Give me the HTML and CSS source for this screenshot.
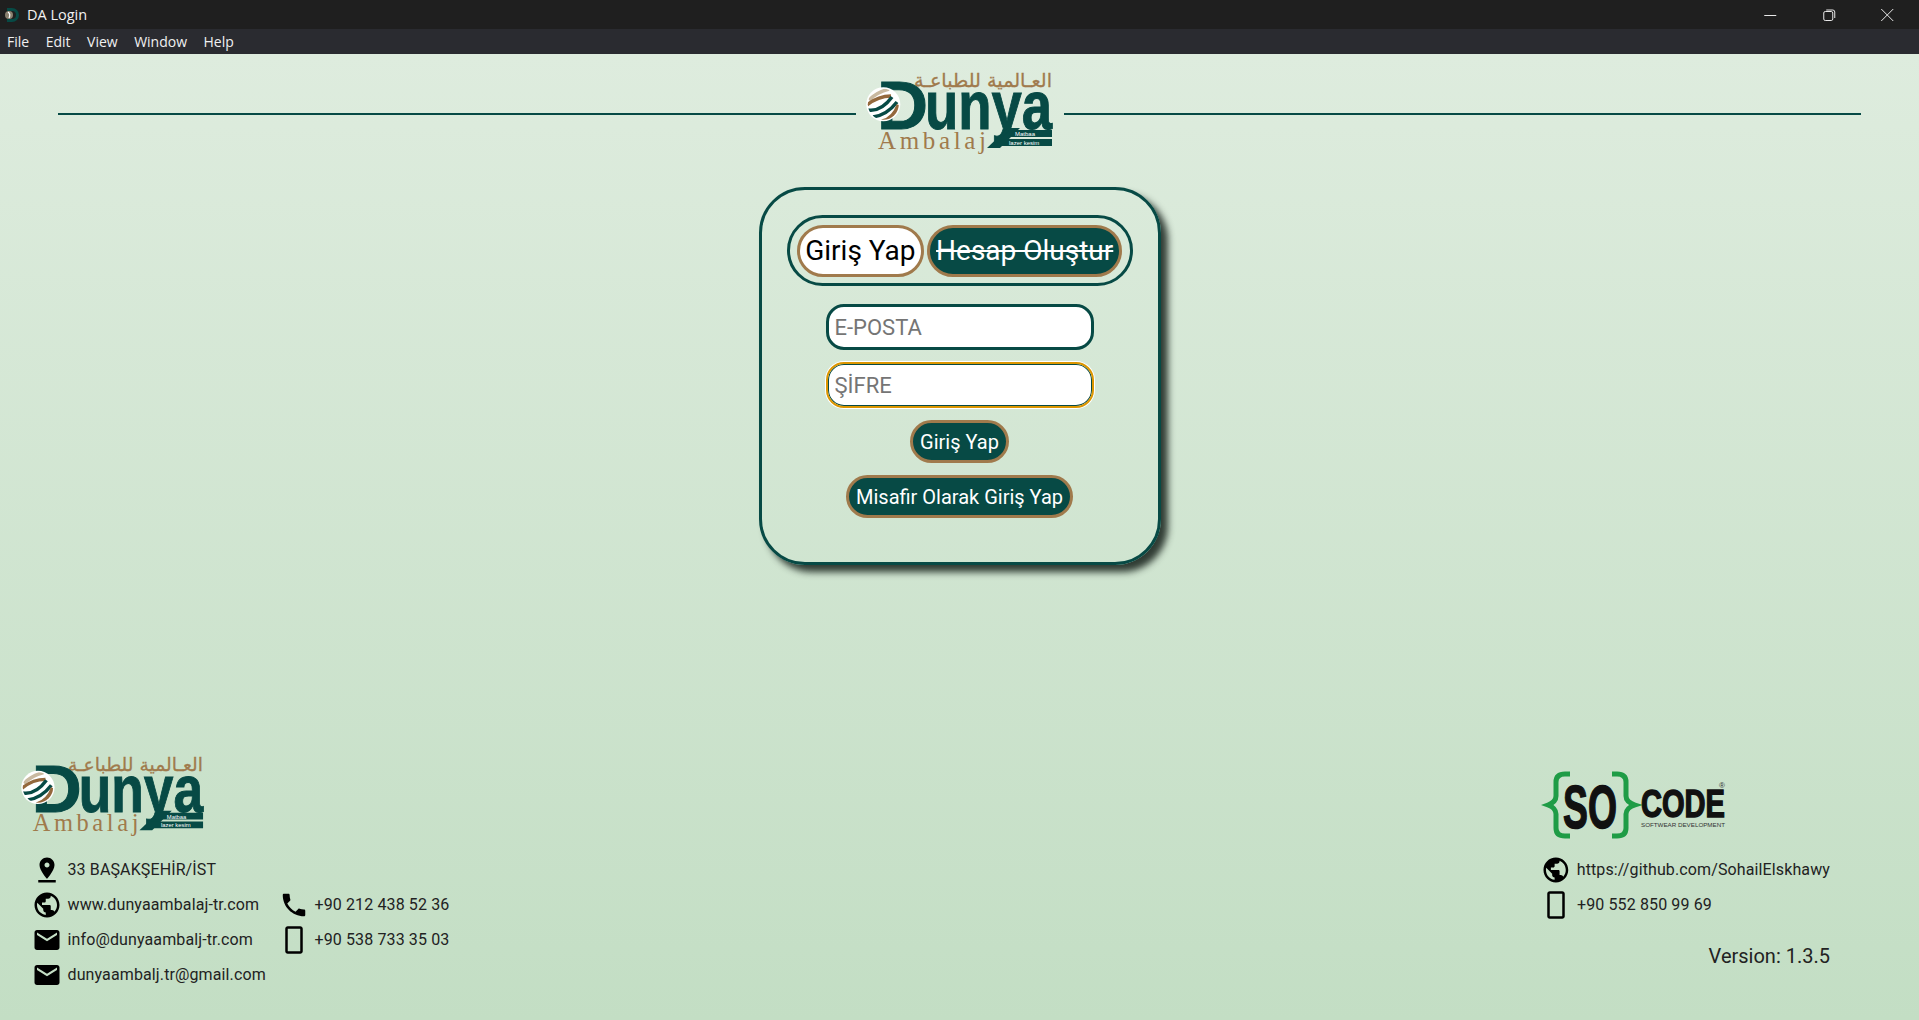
FILE: index.html
```html
<!DOCTYPE html>
<html lang="en">
<head>
    <meta charset="UTF-8">
    <meta name="viewport" content="width=device-width, initial-scale=1.0">
    <title>DA Login</title>
    <link rel="stylesheet" href="styles.css">
</head>
<body>
    <svg class="clip-defs" aria-hidden="true">
        <clipPath id="globe-clip"><circle cx="18.3" cy="34.3" r="15.5"/></clipPath>
    </svg>
    <svg class="defs" aria-hidden="true">
        <symbol id="i-place" viewBox="0 0 24 24"><path d="M18 8c0-3.31-2.69-6-6-6S6 4.69 6 8c0 4.5 6 11 6 11s6-6.5 6-11zm-8 0c0-1.1.9-2 2-2s2 .9 2 2-.89 2-2 2c-1.1 0-2-.9-2-2zM5 20v2h14v-2H5z"/></symbol>
        <symbol id="i-globe" viewBox="0 0 24 24"><path d="M12 2C6.48 2 2 6.48 2 12s4.48 10 10 10 10-4.48 10-10S17.52 2 12 2zm-1 17.93c-3.95-.49-7-3.85-7-7.93 0-.62.08-1.21.21-1.79L9 15v1c0 1.1.9 2 2 2v1.93zm6.9-2.54c-.26-.81-1-1.39-1.9-1.39h-1v-3c0-.55-.45-1-1-1H8v-2h2c.55 0 1-.45 1-1V7h2c1.1 0 2-.9 2-2v-.41c2.93 1.19 5 4.06 5 7.41 0 2.08-.8 3.97-2.1 5.39z"/></symbol>
        <symbol id="i-mail" viewBox="0 0 24 24"><path d="M20 4H4c-1.1 0-1.99.9-1.99 2L2 18c0 1.1.9 2 2 2h16c1.1 0 2-.9 2-2V6c0-1.1-.9-2-2-2zm0 4l-8 5-8-5V6l8 5 8-5v2z"/></symbol>
        <symbol id="i-phone" viewBox="0 0 24 24"><path d="M6.62 10.79c1.44 2.83 3.76 5.14 6.59 6.59l2.2-2.2c.27-.27.67-.36 1.02-.24 1.12.37 2.33.57 3.57.57.55 0 1 .45 1 1V20c0 .55-.45 1-1 1-9.39 0-17-7.61-17-17 0-.55.45-1 1-1h3.5c.55 0 1 .45 1 1 0 1.25.2 2.45.57 3.57.11.35.03.74-.25 1.02l-2.2 2.2z"/></symbol>
        <symbol id="i-mobile" viewBox="0 0 24 24"><path d="M17 1.01L7 1c-1.1 0-2 .9-2 2v18c0 1.1.9 2 2 2h10c1.1 0 2-.9 2-2V3c0-1.1-.9-1.99-2-1.99zM17 21H7V3h10v18z"/></symbol>

        <symbol id="dunya-logo" viewBox="0 0 190 85">
            <text class="logo-ar" x="187" y="17" direction="rtl" textLength="138" lengthAdjust="spacingAndGlyphs">العـالمية للطباعـة</text>
            <text class="logo-word" x="12" y="59" textLength="51" lengthAdjust="spacingAndGlyphs">D</text>
            <text class="logo-word" x="60" y="59" textLength="127" lengthAdjust="spacingAndGlyphs">unya</text>
            <circle class="logo-green" cx="54" cy="29" r="2"/>
            <polygon class="logo-green" points="143,58 155,58 135,78 122,78"/>
            <circle cx="18.3" cy="34.3" r="17" fill="#fff"/>
            <g clip-path="url(#globe-clip)">
                <path d="M4 30q8-8 20-11" class="arc-cream"/>
                <path d="M2 35q11-9 24-9" class="arc-brown"/>
                <path d="M3 40q13 2 24-13" class="arc-green"/>
                <path d="M8 47q14-2 24-15" class="arc-green"/>
                <path d="M17 52q12-3 17-17" class="arc-brown arc-wide"/>
            </g>
            <polygon class="logo-green" points="144,60 187,60 187,67 138,67"/>
            <polygon class="logo-green" points="135,69 187,69 187,76 128,76"/>
            <text class="logo-small" x="150" y="66">Matbaa</text>
            <text class="logo-small" x="144" y="75">lazer kesim</text>
            <text class="logo-amb" x="13" y="79" textLength="108">Ambalaj</text>
        </symbol>

        <symbol id="socode-logo" viewBox="0 0 186 72">
            <path class="brace" d="M29 4h-5q-9 0-9 8v14q0 6-8 9q8 3 8 9v14q0 8 9 8h5"/>
            <path class="brace" d="M71 4h5q9 0 9 8v14q0 6 9 9q-9 3-9 9v14q0 8-9 8h-5"/>
            <text class="so-word" x="22" y="58" textLength="54" lengthAdjust="spacingAndGlyphs">SO</text>
            <text class="code-word" x="100" y="47" textLength="84" lengthAdjust="spacingAndGlyphs">CODE</text>
            <text class="code-sub" x="100" y="57" textLength="84" lengthAdjust="spacingAndGlyphs">SOFTWEAR DEVELOPMENT</text>
            <text class="code-reg" x="178" y="18">®</text>
        </symbol>
    </svg>

    <div class="titlebar">
        <div class="title-left">
            <svg class="app-icon" viewBox="0 0 18 18">
                <path d="M4 2h5a7 7 0 0 1 0 14H4v-3h5a4 4 0 0 0 0-8H4z" fill="#074a45"/>
                <circle cx="6" cy="9" r="4" fill="#8a8170"/>
                <path d="M5 6q3 2 1 6" stroke="#fff" stroke-width="1.2" fill="none"/>
            </svg>
            <span>DA Login</span>
        </div>
        <div class="win-controls">
            <svg viewBox="0 0 12 12"><path d="M0 6.5h12"/></svg>
            <svg viewBox="0 0 12 12"><rect x="0.5" y="2.5" width="9" height="9" rx="1.5"/><path d="M3 1h6.5a2 2 0 0 1 2 2v6"/></svg>
            <svg viewBox="0 0 12 12"><path d="M0 0l12 12M12 0L0 12"/></svg>
        </div>
    </div>
    <nav class="menubar">
        <span>File</span>
        <span>Edit</span>
        <span>View</span>
        <span>Window</span>
        <span>Help</span>
    </nav>

    <main class="page">
        <header class="brand">
            <div class="brand-line"></div>
            <svg class="logo"><use href="#dunya-logo"/></svg>
            <div class="brand-line"></div>
        </header>

        <section class="card">
            <div class="tabs">
                <button class="tab tab-active">Giriş Yap</button>
                <button class="tab tab-off">Hesap Oluştur</button>
            </div>
            <input class="field" type="text" placeholder="E-POSTA">
            <input class="field field-focus" type="password" placeholder="ŞİFRE">
            <button class="action">Giriş Yap</button>
            <button class="action">Misafir Olarak Giriş Yap</button>
        </section>

        <footer class="footer">
            <div class="foot-left">
                <svg class="logo logo-foot"><use href="#dunya-logo"/></svg>
                <div class="contacts">
                    <div class="contact"><svg class="icon"><use href="#i-place"/></svg><span>33 BAŞAKŞEHİR/İST</span></div>
                    <div></div>
                    <div class="contact"><svg class="icon"><use href="#i-globe"/></svg><span>www.dunyaambalaj-tr.com</span></div>
                    <div class="contact"><svg class="icon"><use href="#i-phone"/></svg><span>+90 212 438 52 36</span></div>
                    <div class="contact"><svg class="icon"><use href="#i-mail"/></svg><span>info@dunyaambalj-tr.com</span></div>
                    <div class="contact"><svg class="icon"><use href="#i-mobile"/></svg><span>+90 538 733 35 03</span></div>
                    <div class="contact"><svg class="icon"><use href="#i-mail"/></svg><span>dunyaambalj.tr@gmail.com</span></div>
                </div>
            </div>
            <div class="foot-right">
                <svg class="socode"><use href="#socode-logo"/></svg>
                <div class="contact"><svg class="icon"><use href="#i-globe"/></svg><span>https://github.com/SohailElskhawy</span></div>
                <div class="contact"><svg class="icon"><use href="#i-mobile"/></svg><span>+90 552 850 99 69</span></div>
                <div class="version">Version: 1.3.5</div>
            </div>
        </footer>
    </main>
</body>
</html>
```

FILE: styles.css
```css
* {
    box-sizing: border-box;
}

html, body {
    height: 100%;
}

body {
    margin: 0;
    display: flex;
    flex-direction: column;
    overflow: hidden;
    font-family: Roboto, sans-serif;
}

.defs {
    display: none;
}

.clip-defs {
    position: absolute;
    width: 0;
    height: 0;
}

/* window chrome */
.titlebar {
    height: 29px;
    flex: none;
    display: flex;
    justify-content: space-between;
    align-items: center;
    background-color: #1f1f1f;
    color: #f2f2f2;
    font-family: "Open Sans", sans-serif;
    font-size: 14.5px;
}

.title-left {
    display: flex;
    align-items: center;
    gap: 6px;
    padding-left: 3px;
}

.app-icon {
    width: 18px;
    height: 18px;
}

.win-controls {
    display: flex;
    padding-right: 2.5px;
}

.win-controls svg {
    width: 58.5px;
    height: 12px;
    fill: none;
    stroke: #e8e8e8;
    stroke-width: 1;
}

.menubar {
    height: 25px;
    flex: none;
    display: flex;
    align-items: center;
    gap: 16.5px;
    padding-left: 7px;
    background-color: #2a2b30;
    color: #f0f0f0;
    font-family: "Open Sans", sans-serif;
    font-size: 14px;
}

/* main page */
.page {
    flex: 1;
    display: flex;
    flex-direction: column;
    align-items: center;
    background: linear-gradient(#deecde, #c3dec4);
}

.brand {
    width: 100%;
    display: flex;
    align-items: center;
    gap: 9px;
    margin-top: 16px;
    padding: 0 58px;
}

.brand-line {
    flex: 1;
    height: 2px;
    margin-top: 3px;
    background-color: #074a45;
}

.logo {
    width: 190px;
    height: 85px;
    flex: none;
}

.logo-ar {
    font-family: "DejaVu Sans", sans-serif;
    font-size: 19px;
    fill: #a07a4c;
    stroke: #a07a4c;
    stroke-width: 0.3;
}

.logo-word {
    font-family: "Liberation Sans", sans-serif;
    font-weight: bold;
    font-size: 69px;
    fill: #074a45;
    stroke: #074a45;
    stroke-width: 1;
}

.logo-green {
    fill: #074a45;
}

.logo-small {
    font-family: "Liberation Sans", sans-serif;
    font-size: 6px;
    fill: #fff;
}

.logo-amb {
    font-family: "Liberation Serif", serif;
    font-size: 25px;
    fill: #a07a4c;
}

.arc-brown, .arc-cream, .arc-green {
    fill: none;
    stroke-width: 3.5;
}

.arc-brown {
    stroke: #94683c;
}

.arc-wide {
    stroke-width: 5;
}

.arc-cream {
    stroke: #c9b9a0;
}

.arc-green {
    stroke: #074a45;
}

/* login card */
.card {
    width: 402px;
    margin-top: 32px;
    padding: 25px 0 44px;
    display: flex;
    flex-direction: column;
    align-items: center;
    border: 3px solid #074a45;
    border-radius: 46px;
    box-shadow: 7px 7px 7px rgba(20, 30, 25, 0.85);
}

.tabs {
    width: 346px;
    height: 71px;
    display: flex;
    align-items: center;
    justify-content: center;
    gap: 3px;
    border: 3px solid #074a45;
    border-radius: 36px;
}

.tab {
    height: 52px;
    padding: 0 6px;
    border: 3px solid #a07a4c;
    border-radius: 26px;
    font-family: Roboto, sans-serif;
    font-size: 28px;
}

.tab-active {
    padding: 0 5.5px;
    background-color: #fff;
    color: #000;
}

.tab-off {
    background-color: #074a45;
    color: #fff;
    text-decoration: line-through;
}

.field {
    width: 268px;
    height: 46px;
    margin-top: 18px;
    padding: 0 6px;
    border: 3px solid #074a45;
    border-radius: 18px;
    background-color: #fff;
    font-family: Roboto, sans-serif;
    font-size: 22px;
}

.field::placeholder {
    color: #757575;
}

.field-focus {
    margin-top: 12px;
    padding: 0 7px;
    border: 2px solid #dc9600;
    box-shadow: 0 0 0 1px #fff, inset 0 0 0 1px #074a45;
}

.action {
    height: 43px;
    margin-top: 12px;
    padding: 0 7px;
    border: 3px solid #a07a4c;
    border-radius: 22px;
    background-color: #074a45;
    color: #fff;
    font-family: Roboto, sans-serif;
    font-size: 20px;
}

/* footer */
.footer {
    width: 100%;
    margin-top: auto;
    display: flex;
    justify-content: space-between;
    align-items: flex-end;
    padding: 0 89px 28px 20px;
}

.logo-foot {
    width: 186px;
    display: block;
    margin-bottom: 14px;
}

.contacts {
    display: grid;
    grid-template-columns: 247px auto;
    grid-auto-rows: 35px;
    margin-left: 11.5px;
}

.contact {
    height: 35px;
    display: flex;
    align-items: center;
    gap: 6px;
    font-size: 16px;
    letter-spacing: 0.12px;
    color: #222;
}

.icon {
    width: 30px;
    height: 30px;
    fill: #000;
}

.foot-right {
    width: 289px;
    display: flex;
    flex-direction: column;
}

.socode {
    width: 186px;
    height: 72px;
    margin-bottom: 10px;
}

.brace {
    fill: none;
    stroke: #1f9c46;
    stroke-width: 5;
}

.so-word, .code-word {
    font-family: "Liberation Sans", sans-serif;
    font-weight: bold;
    fill: #111;
    stroke: #111;
    stroke-width: 1.5;
}

.so-word {
    font-size: 61px;
}

.code-word {
    font-size: 39px;
}

.code-sub {
    font-family: "Liberation Sans", sans-serif;
    font-size: 6px;
    fill: #333;
}

.code-reg {
    font-family: "Liberation Sans", sans-serif;
    font-size: 8px;
    fill: #333;
}

.version {
    margin-top: 22px;
    margin-bottom: 24px;
    text-align: right;
    font-size: 20px;
    line-height: 24px;
    color: #222;
}
```
